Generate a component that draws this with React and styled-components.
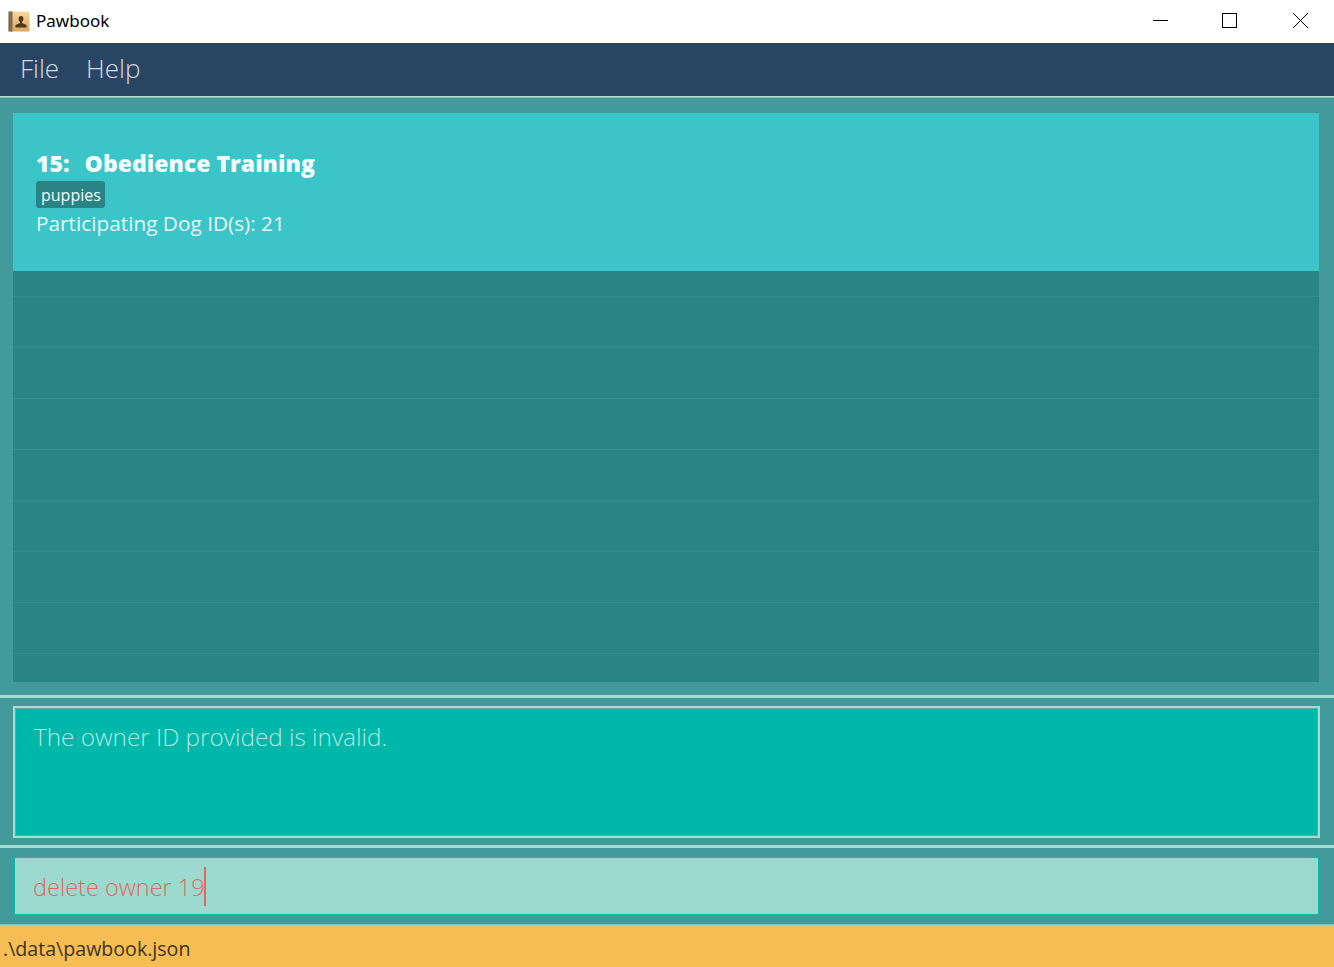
import styled, { createGlobalStyle } from "styled-components";

const GlobalStyle = createGlobalStyle`
  html, body {
    margin: 0;
    padding: 0;
    height: 100%;
    overflow: hidden;
  }
  #root {
    height: 100%;
  }
`;

const Window = styled.div`
  width: 1334px;
  height: 967px;
  display: flex;
  flex-direction: column;
  background: #429a9b;
  font-family: "Open Sans", "Liberation Sans", sans-serif;
`;

const TitleBar = styled.div`
  height: 43px;
  flex: none;
  background: #fff;
  display: flex;
  align-items: center;
  padding-left: 8px;
  box-sizing: border-box;
`;

const AppName = styled.span`
  margin-left: 6px;
  font-size: 17px;
  color: #000;
  font-family: "Noto Sans", sans-serif;
  position: relative;
  top: -1px;
  flex: 1;
`;

const WinControls = styled.div`
  width: 155px;
  margin-right: 26px;
  padding-bottom: 2px;
  display: flex;
  align-items: center;
  justify-content: space-between;
`;

const WinIcon = styled.svg`
  width: 15px;
  height: 15px;
  display: block;
  &:nth-child(2) {
    margin-right: 2px;
  }
`;

const MenuBar = styled.div`
  height: 54px;
  flex: none;
  box-sizing: border-box;
  background: #284563;
  border-bottom: 1px solid #b0e0d8;
  box-shadow: 0 1px 0 #7cc2b9;
  display: flex;
  align-items: center;
  padding: 0 0 4px 20px;
  gap: 27px;
`;

const MenuItem = styled.span`
  font-family: "Open Sans", sans-serif;
  font-weight: 300;
  font-size: 26px;
  color: #d5dae0;
`;

const ListPane = styled.div`
  height: 598px;
  flex: none;
  box-sizing: border-box;
  padding: 16px 15px 13px 13px;
`;

const List = styled.div`
  height: 100%;
  background: #298486;
  display: flex;
  flex-direction: column;
  overflow: hidden;
`;

const Card = styled.div`
  height: 158px;
  flex: none;
  box-sizing: border-box;
  background: #3bc5c9;
  padding: 35px 0 0 23px;
  color: #eefbfb;
`;

const CardTitle = styled.div`
  font-family: "Open Sans", sans-serif;
  font-weight: 800;
  font-size: 23px;
  line-height: 31px;
  color: #f2fcfc;
  display: flex;
  gap: 15px;
`;

const TagRow = styled.div`
  height: 27px;
  display: flex;
  margin-top: 2px;
`;

const Tag = styled.span`
  display: inline-block;
  background: #298486;
  border-radius: 3px;
  color: #f2fcfc;
  font-size: 16px;
  line-height: 29px;
  height: 27px;
  padding: 0 4px 0 5px;
`;

const Participants = styled.div`
  font-size: 20.8px;
  line-height: 30px;
  color: #e6f8f8;
`;

const Rows = styled.div`
  display: flex;
  flex-direction: column;
`;

const EmptyRow = styled.div`
  height: ${(p) => (p.$first ? "26px" : "51px")};
  flex: none;
  box-sizing: border-box;
  border-bottom: 1px solid #328e8f;
`;

const Rule = styled.div`
  height: 3px;
  flex: none;
  background: #a6dcd3;
`;

const ResultPane = styled.div`
  height: 147px;
  flex: none;
  box-sizing: border-box;
  padding: 8px 14px 7px 13px;
`;

const ResultBox = styled.div`
  height: 100%;
  box-sizing: border-box;
  background: #00b8aa;
  border: 2px solid #a6dcd3;
  box-shadow: inset 0 0 0 1px #5fa9a4;
  padding: 12px 0 0 19px;
  font-family: "Open Sans", sans-serif;
  font-weight: 300;
  font-size: 24.3px;
  line-height: 33px;
  color: #b5e8e0;
`;

const CommandPane = styled.div`
  height: 76px;
  flex: none;
  box-sizing: border-box;
  padding: 9px 15px 9px 14px;
`;

const CommandBox = styled.div`
  height: 58px;
  box-sizing: border-box;
  background: #9cd9cf;
  border: 1px solid #00bcaa;
  display: flex;
  align-items: center;
  padding: 2px 0 0 18px;
  font-family: "Open Sans", sans-serif;
  font-weight: 300;
  font-size: 23.5px;
  color: #e2685e;
`;

const Caret = styled.span`
  width: 2px;
  height: 39px;
  margin: -2px 0 0 -1px;
  background: #e0695f;
`;

const StatusBar = styled.div`
  flex: 1;
  background: #f6bd53;
  border-top: 1px solid #7fc4bb;
  padding-left: 3px;
  font-family: "Open Sans", sans-serif;
  font-size: 19.6px;
  font-weight: 400;
  line-height: 47px;
  color: #3b3526;
`;

const AppIcon = () => (
  <svg width="22" height="21" viewBox="0 0 22 21">
    <defs>
      <linearGradient id="cover" x1="0" y1="0" x2="0" y2="1">
        <stop offset="0" stopColor="#f6d99c" />
        <stop offset="1" stopColor="#dca55a" />
      </linearGradient>
    </defs>
    <rect x="0.5" y="0.5" width="21" height="20" rx="1" fill="url(#cover)" />
    <rect x="0.5" y="0.5" width="4" height="20" fill="#7d6a58" />
    <ellipse cx="13" cy="8" rx="2.4" ry="3" fill="#4f3822" />
    <path d="M12 10.5h2v1.5l4.500 2v2.500h-11v-2.500l4.500-2z" fill="#4f3822" />
  </svg>
);

const App = () => {
  return (
    <Window>
      <GlobalStyle />
      <TitleBar>
        <AppIcon />
        <AppName>Pawbook</AppName>
        <WinControls>
          <WinIcon viewBox="0 0 15 15">
            <path d="M0 7.500h15" stroke="#000" />
          </WinIcon>
          <WinIcon viewBox="0 0 15 15">
            <rect x="0.5" y="0.5" width="14" height="14" fill="none" stroke="#000" />
          </WinIcon>
          <WinIcon viewBox="0 0 15 15">
            <path d="M0 0l15 15M15 0l-15 15" stroke="#000" fill="none" />
          </WinIcon>
        </WinControls>
      </TitleBar>
      <MenuBar>
        <MenuItem>File</MenuItem>
        <MenuItem>Help</MenuItem>
      </MenuBar>
      <ListPane>
        <List>
          <Card>
            <CardTitle>
              <span>15:</span>
              <span>Obedience Training</span>
            </CardTitle>
            <TagRow>
              <Tag>puppies</Tag>
            </TagRow>
            <Participants>Participating Dog ID(s): 21</Participants>
          </Card>
          <Rows>
            {Array.from({ length: 8 }, (_, i) => (
              <EmptyRow key={i} $first={i === 0} />
            ))}
          </Rows>
        </List>
      </ListPane>
      <Rule />
      <ResultPane>
        <ResultBox>The owner ID provided is invalid.</ResultBox>
      </ResultPane>
      <Rule />
      <CommandPane>
        <CommandBox>
          delete owner 19
          <Caret />
        </CommandBox>
      </CommandPane>
      <StatusBar>.\data\pawbook.json</StatusBar>
    </Window>
  );
};

export default App;
